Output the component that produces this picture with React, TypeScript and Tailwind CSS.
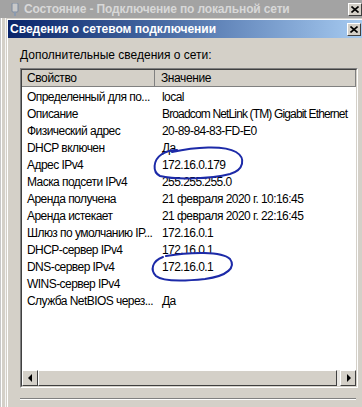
const FONT = { fontFamily: '"Liberation Sans", Arial, sans-serif' };

// [property, value, tighter spacing for long values]
const rows: [string, string, boolean?][] = [
  ['Определенный для по...', 'local'],
  ['Описание', 'Broadcom NetLink (TM) Gigabit Ethernet', true],
  ['Физический адрес', '20-89-84-83-FD-E0'],
  ['DHCP включен', 'Да'],
  ['Адрес IPv4', '172.16.0.179'],
  ['Маска подсети IPv4', '255.255.255.0'],
  ['Аренда получена', '21 февраля 2020 г. 10:16:45'],
  ['Аренда истекает', '21 февраля 2020 г. 22:16:45'],
  ['Шлюз по умолчанию IP...', '172.16.0.1'],
  ['DHCP-сервер IPv4', '172.16.0.1'],
  ['DNS-сервер IPv4', '172.16.0.1'],
  ['WINS-сервер IPv4', ''],
  ['Служба NetBIOS через...', 'Да'],
];

function CloseButton() {
  return (
    <div className="flex h-[13px] w-[14px] items-center justify-center border border-t-white border-l-white border-b-[#404040] border-r-[#404040] bg-[#d4d0c8]">
      <svg width="8" height="7" viewBox="0 0 8 7">
        <path d="M0.5 0.5 L7.5 6.5 M7.5 0.5 L0.5 6.5" stroke="#000" strokeWidth="1.6" />
      </svg>
    </div>
  );
}

function ScrollButton({ dir }: { dir: 'left' | 'right' }) {
  return (
    <div className="flex h-[16px] w-[16px] shrink-0 items-center justify-center border border-t-white border-l-white border-b-[#404040] border-r-[#404040] bg-[#d4d0c8]">
      <svg width="5" height="8" viewBox="0 0 5 8">
        {dir === 'left' ? <path d="M4 0 L0 4 L4 8 Z" fill="#000" /> : <path d="M1 0 L5 4 L1 8 Z" fill="#000" />}
      </svg>
    </div>
  );
}

export default function App() {
  return (
    <div className="relative flex h-[407px] w-[362px] flex-col overflow-hidden bg-[#d4d0c8] text-black" style={FONT}>
      {/* outer (inactive) window title */}
      <div className="flex h-[18px] shrink-0 items-center bg-[#a3a3a3] pl-[11px]">
        <svg width="8" height="13" viewBox="0 0 8 13" className="mr-[5px]">
          <rect x="1" y="0" width="6" height="9" rx="1" fill="#c9c9c9" stroke="#7a8aa0" />
          <rect x="3" y="9" width="2" height="4" fill="#8a9ab0" />
        </svg>
        <span className="text-[12px] font-bold tracking-[-0.15px] text-[#d8d8d8]">Состояние - Подключение по локальной сети</span>
        <div className="ml-auto">
          <CloseButton />
        </div>
      </div>

      <div className="flex min-h-0 flex-1">
        {/* outer window frame */}
        <div className="flex w-[7px] shrink-0">
          <div className="w-[1px] bg-[#c8c8c8]" />
          <div className="w-[1px] bg-white" />
          <div className="w-[3px] bg-[#d4d0c8]" />
          <div className="w-[1px] bg-[#f4f4f4]" />
          <div className="w-[1px] bg-[#d4d0c8]" />
        </div>

        {/* inner dialog */}
        <div className="mt-[1px] flex min-w-0 flex-1 flex-col border-l border-t border-white">
          <div className="flex h-[18px] shrink-0 items-center bg-gradient-to-r from-[#0a246a] to-[#a6caf0] pl-[2px] pr-[1px]">
            <span className="text-[12px] font-bold text-white">Сведения о сетевом подключении</span>
            <div className="ml-auto">
              <CloseButton />
            </div>
          </div>

          <div className="flex min-h-0 flex-1 flex-col pl-[12px] pr-[4px]">
            <div className="mt-[10px] h-[14px] text-[12px] leading-[14px]">Дополнительные сведения о сети:</div>

            <div className="mt-[6px] flex h-[320px] shrink-0 flex-col border border-[#808080] border-b-white border-r-white">
              <div className="flex min-h-0 flex-1 flex-col border border-[#404040] border-b-[#d4d0c8] border-r-[#d4d0c8] bg-white">
                <div className="flex h-[17px] shrink-0 text-[12px] tracking-[-0.4px]">
                  <div className="flex w-[133px] items-center border-b border-r border-b-[#808080] border-r-[#808080] bg-[#d4d0c8] pl-[5px]">
                    Свойство
                  </div>
                  <div className="flex flex-1 items-center border-b border-r border-b-[#808080] border-r-[#808080] bg-[#d4d0c8] pl-[6px]">
                    Значение
                  </div>
                </div>
                <div className="min-h-0 flex-1 overflow-hidden pt-[1px] text-[12px] tracking-[-0.55px]">
                  {rows.map(([k, v, tight], i) => (
                    <div key={i} className="flex h-[17px] items-center whitespace-nowrap">
                      <div className="w-[133px] shrink-0 overflow-hidden pl-[5px]">{k}</div>
                      <div className={tight ? 'pl-[7px] tracking-[-0.85px]' : 'pl-[7px]'}>{v}</div>
                    </div>
                  ))}
                </div>
                {/* horizontal scrollbar */}
                <div className="flex h-[16px] shrink-0 bg-[#e8e6e2]">
                  <ScrollButton dir="left" />
                  <div className="h-[16px] w-[299px] shrink-0 border border-t-white border-l-white border-b-[#404040] border-r-[#404040] bg-[#d4d0c8]" />
                  <div className="flex-1" />
                  <ScrollButton dir="right" />
                </div>
              </div>
            </div>

            <div className="mt-[10px] mr-[2px] h-[2px] shrink-0 border-t border-b border-t-[#808080] border-b-white" />
          </div>
        </div>
      </div>

      {/* hand-drawn highlight marks */}
      <svg className="pointer-events-none absolute left-0 top-0" width="362" height="407" viewBox="0 0 362 407">
        <path
          d="M172 152 C195 147 224 145 236 152 C246 158 244 170 230 174 C210 179 176 180 160 176 C152 172 153 160 162 154 C167 151 171 150 177 150"
          fill="none"
          stroke="#1c2aa8"
          strokeWidth="2"
          strokeLinecap="round"
        />
        <path
          d="M166 256 C190 252 222 251 230 259 C236 267 228 276 205 279 C185 281 163 282 156 276 C150 270 152 261 163 257"
          fill="none"
          stroke="#1c2aa8"
          strokeWidth="2"
          strokeLinecap="round"
        />
      </svg>
    </div>
  );
}
